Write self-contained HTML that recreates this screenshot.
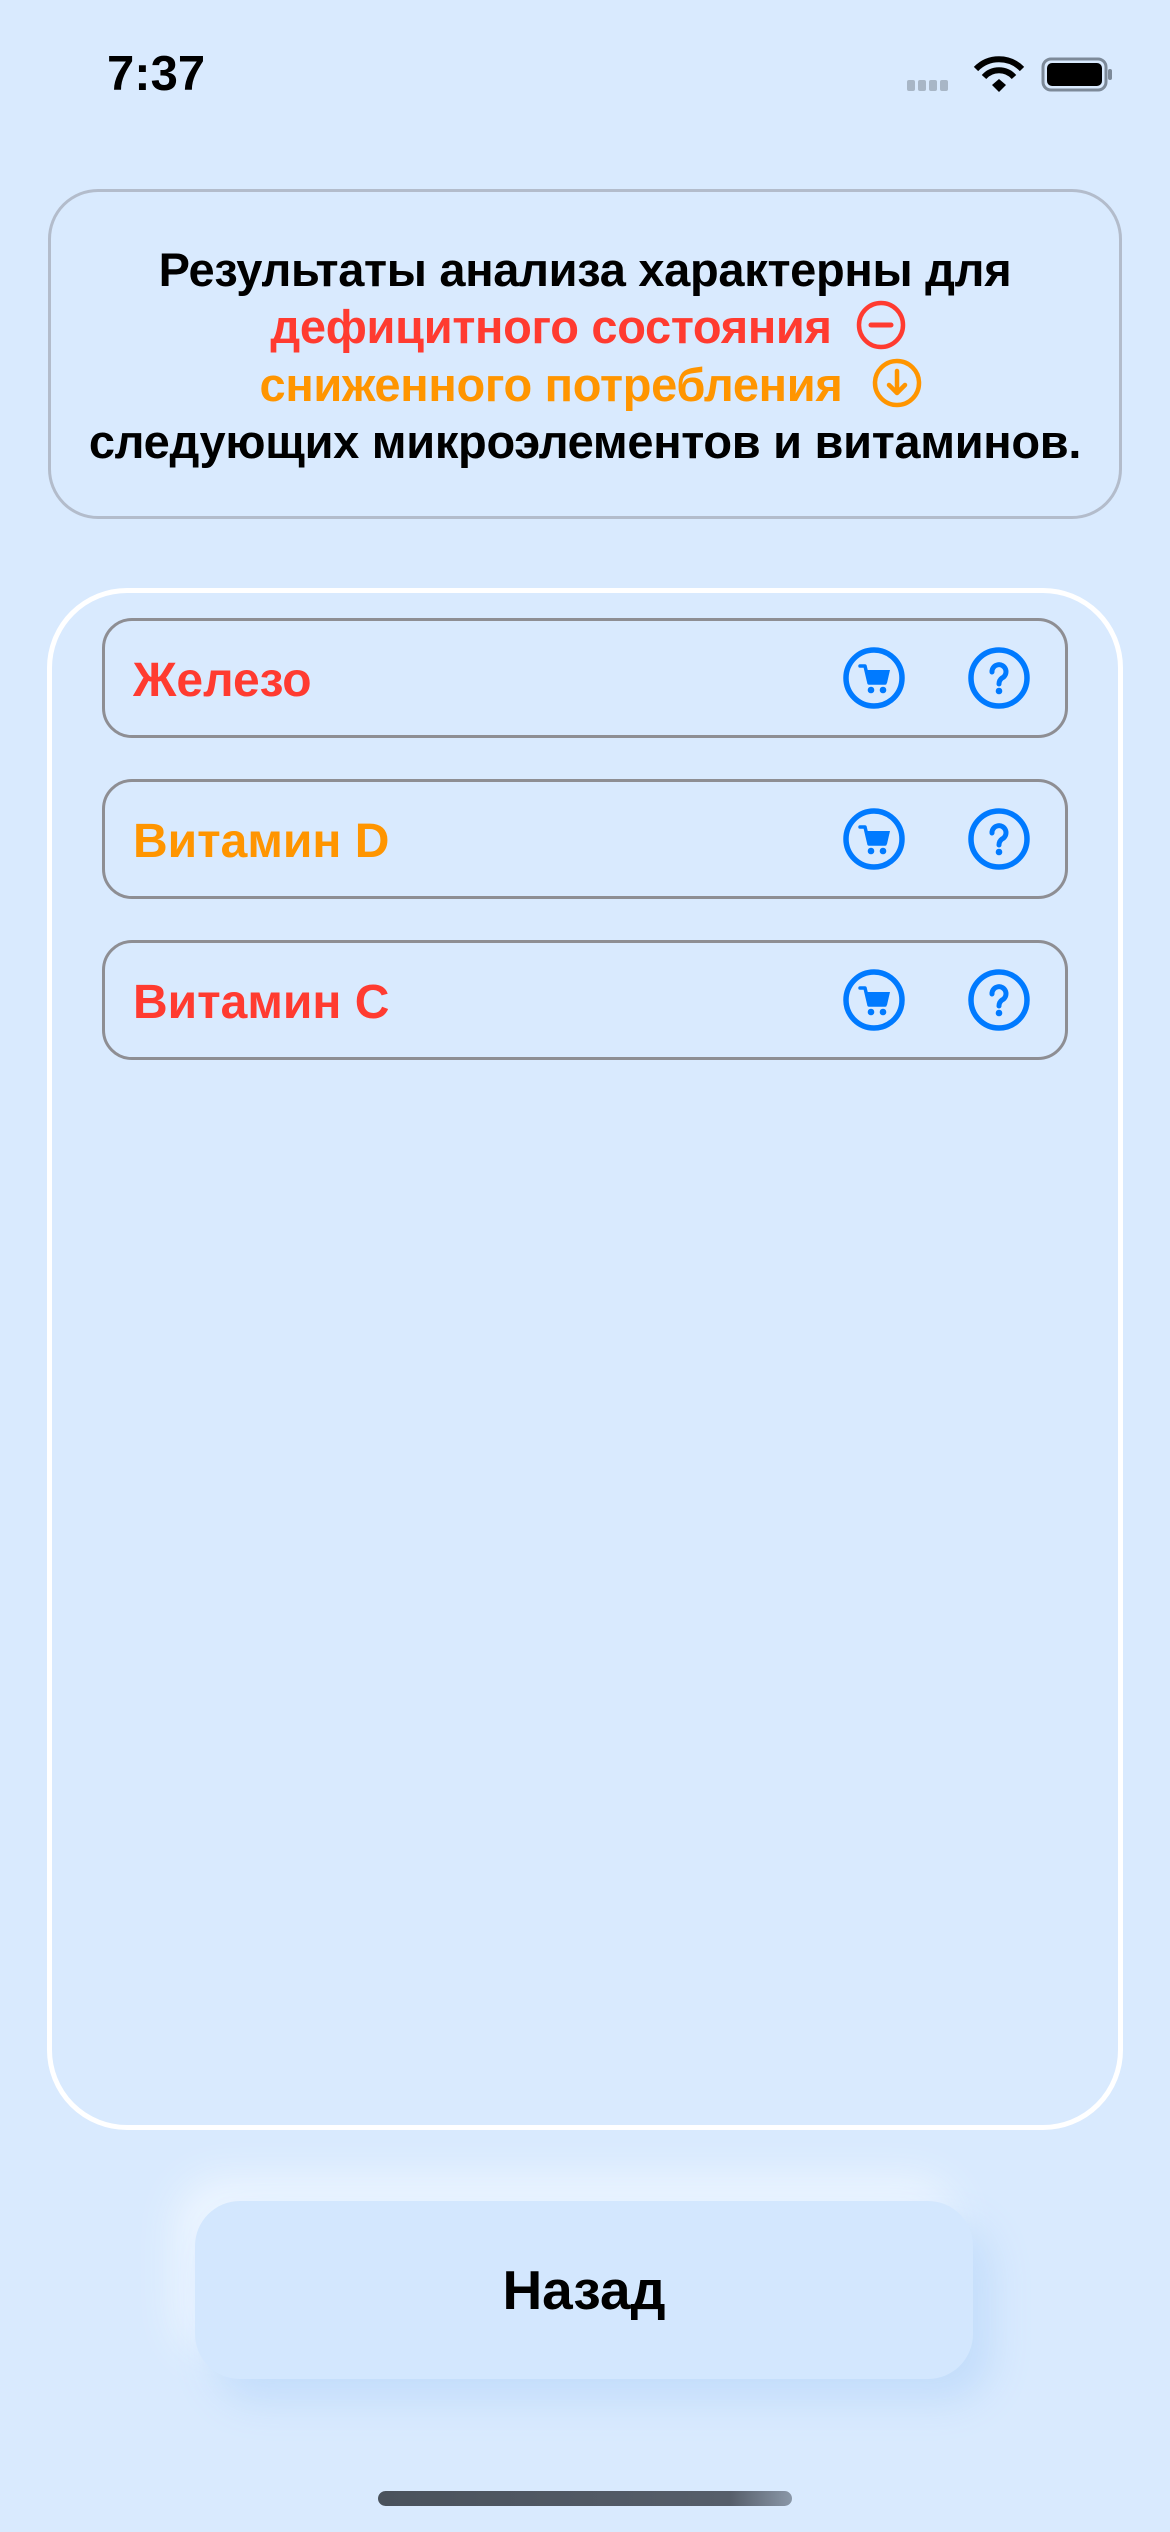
<!DOCTYPE html>
<html><head><meta charset="utf-8"><style>
*{margin:0;padding:0;box-sizing:border-box}
body{width:1170px;height:2532px;background:#d9eafe;position:relative;overflow:hidden;font-family:"Liberation Sans","DejaVu Sans",sans-serif}
.abs{position:absolute}
.time{left:107px;top:46px;font-size:49px;font-weight:bold;color:#000}
.top{left:48px;top:189px;width:1074px;height:330px;border:3px solid #b3bccb;border-radius:50px}
.line{position:absolute;left:0;width:1170px;text-align:center;font-size:47px;font-weight:bold;white-space:nowrap;letter-spacing:-0.3px}
.big{left:47px;top:588px;width:1076px;height:1542px;border:5px solid #fff;border-radius:80px}
.row{position:absolute;left:102px;width:966px;height:120px;border:3px solid #8e8e93;border-radius:30px}
.row span{position:absolute;left:28px;top:32px;font-size:48px;font-weight:bold}
.btn{left:195px;top:2201px;width:778px;height:178px;border-radius:45px;background:#d3e7fe;box-shadow:18px 22px 40px #c3ddfb,-18px -22px 40px #eef6ff;text-align:center;line-height:178px;font-size:55px;font-weight:bold;color:#000}
.home{left:378px;top:2491px;width:414px;height:15px;border-radius:8px;background:linear-gradient(90deg,#4a525c,#565e6a 85%,#8a97a8)}
</style></head><body>
<div class="abs time">7:37</div>
<svg class="abs" style="left:900px;top:52px" width="220" height="45" viewBox="0 0 220 45">
<g fill="#a8b6c6"><rect x="7" y="28" width="8" height="11" rx="2"/><rect x="18" y="28" width="8" height="11" rx="2"/><rect x="29" y="28" width="8" height="11" rx="2"/><rect x="40" y="28" width="8" height="11" rx="2"/></g>
<path d="M76 17a32 32 0 0 1 46 0" stroke="#000" stroke-width="6" fill="none"/>
<path d="M84 25a20 20 0 0 1 30 0" stroke="#000" stroke-width="6" fill="none"/>
<path d="M92 33l7 -6 7 6-7 7z" fill="#000"/>
<rect x="143" y="7" width="63" height="31" rx="8" fill="none" stroke="#7d8a99" stroke-width="3"/>
<rect x="147" y="11" width="55" height="23" rx="5" fill="#000"/>
<rect x="208" y="17" width="4" height="11" rx="2" fill="#7d8a99"/>
</svg>
<div class="abs top"></div>
<div class="line" style="top:242px;color:#000">Результаты анализа характерны для</div>
<div class="line" style="top:299px;color:#ff3b30;left:-34px">дефицитного состояния</div>
<div class="line" style="top:357px;color:#ff9500;left:-34px">сниженного потребления</div>
<div class="line" style="top:414px;color:#000">следующих микроэлементов и витаминов.</div>
<svg class="abs" style="left:855px;top:299px" width="52" height="52"><circle cx="26" cy="26" r="22" fill="none" stroke="#ff3b30" stroke-width="4.5"/><line x1="16" y1="26" x2="36" y2="26" stroke="#ff3b30" stroke-width="5" stroke-linecap="round"/></svg>
<svg class="abs" style="left:871px;top:357px" width="52" height="52"><circle cx="26" cy="26" r="22" fill="none" stroke="#ff9500" stroke-width="4.5"/><path d="M26 14v22M18 28l8 8 8-8" fill="none" stroke="#ff9500" stroke-width="4.5" stroke-linecap="round" stroke-linejoin="round"/></svg>
<div class="abs big"></div>
<div class="row" style="top:618px"><span style="color:#ff3b30">Железо</span></div>
<div class="row" style="top:779px"><span style="color:#ff9500">Витамин D</span></div>
<div class="row" style="top:940px"><span style="color:#ff3b30">Витамин C</span></div>
<svg width="0" height="0" style="position:absolute"><defs>
<g id="cart"><circle cx="32" cy="32" r="28" fill="none" stroke="#007aff" stroke-width="5.5"/><path d="M18 20h5l4 17h16" fill="none" stroke="#007aff" stroke-width="3.5" stroke-linejoin="round" stroke-linecap="round"/><path d="M23 24h25l-3 13H26z" fill="#007aff"/><circle cx="29" cy="44" r="3.3" fill="#007aff"/><circle cx="41" cy="44" r="3.3" fill="#007aff"/></g>
<g id="q"><circle cx="32" cy="32" r="28" fill="none" stroke="#007aff" stroke-width="5.5"/><path d="M25 26a7 7 0 1 1 10 6c-2 1.5-3 3-3 6" fill="none" stroke="#007aff" stroke-width="5" stroke-linecap="round"/><circle cx="32" cy="45" r="3.3" fill="#007aff"/></g>
</defs></svg>
<svg class="abs" style="left:842px;top:646px" width="64" height="64"><use href="#cart"/></svg>
<svg class="abs" style="left:967px;top:646px" width="64" height="64"><use href="#q"/></svg>
<svg class="abs" style="left:842px;top:807px" width="64" height="64"><use href="#cart"/></svg>
<svg class="abs" style="left:967px;top:807px" width="64" height="64"><use href="#q"/></svg>
<svg class="abs" style="left:842px;top:968px" width="64" height="64"><use href="#cart"/></svg>
<svg class="abs" style="left:967px;top:968px" width="64" height="64"><use href="#q"/></svg>
<div class="abs btn">Назад</div>
<div class="abs home"></div>
</body></html>
